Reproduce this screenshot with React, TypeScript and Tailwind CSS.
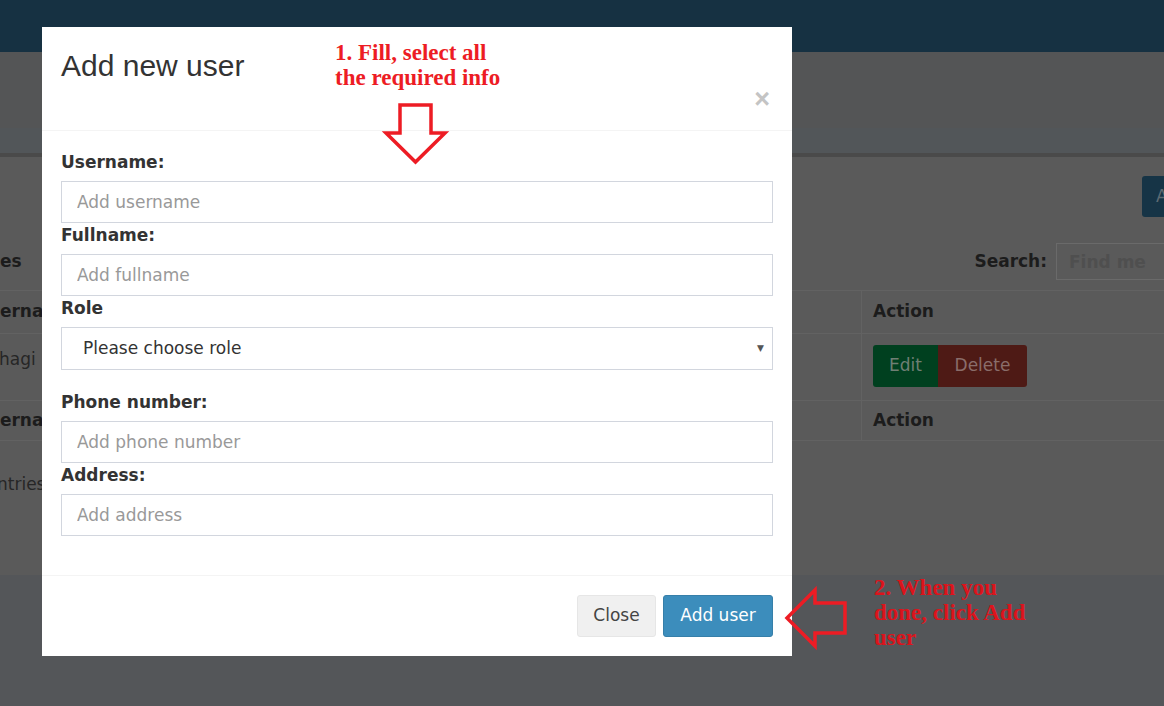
import React from "react";

const red = "#ed1c24";

function Field({ label, ph }: { label: string; ph: string }) {
  return (
    <div>
      <label className="mb-[6px] block text-[17px] font-bold leading-[25px] text-[#333]">{label}</label>
      <input
        className="block h-[42px] w-full border border-[#d2d6de] px-[15px] text-[17px] text-[#555] outline-none placeholder:text-[#999]"
        placeholder={ph}
      />
    </div>
  );
}

function Background() {
  return (
    <div className="flex h-full flex-col">
      <div className="h-[52px] bg-[#163142]" />
      <div className="h-[76px] bg-[#545556]" />
      <div className="h-[25px] bg-[#525659]" />
      <div className="h-[4px] bg-[#4a4a4a]" />
      <div className="h-[418px] overflow-hidden bg-[#5a5a5a] pt-[19px] text-[17px] text-[#1c1c1c]">
        <div className="flex h-[41px] justify-end">
          <div className="-mr-[60px] flex w-[82px] items-center rounded-[3px] bg-[#163446] pl-[14px] text-[#5d6a72]">
            Add
          </div>
        </div>
        <div className="mt-[26px] flex h-[37px] items-center justify-between">
          <span className="font-bold">es</span>
          <div className="flex items-center">
            <span className="font-bold">Search:</span>
            <div className="-mr-[12px] ml-[9px] flex h-[37px] w-[120px] items-center border border-[#6a6a6a] pl-[12px] pt-[2px] font-bold text-[#4f4f4f]">
              Find me
            </div>
          </div>
        </div>
        <div className="mt-[10px] border-t border-[#626262]">
          <div className="flex h-[43px] border-b border-[#626262] font-bold">
            <div className="flex w-[861px] items-center overflow-hidden">
              <span className="-ml-[24px]">Username</span>
            </div>
            <div className="flex flex-1 items-center border-l border-[#626262] pl-[11px]">Action</div>
          </div>
          <div className="flex h-[67px] border-b border-[#626262]">
            <div className="w-[861px] overflow-hidden pt-[13px] text-[#262626]">
              <span className="-ml-[1px]">hagi</span>
            </div>
            <div className="flex-1 border-l border-[#626262] pl-[11px] pt-[11px]">
              <div className="flex h-[42px] w-[154px] overflow-hidden rounded-[3px]">
                <div className="flex w-[65px] items-center justify-center bg-[#00401f] text-[#6f7f74]">Edit</div>
                <div className="flex flex-1 items-center justify-center bg-[#4e1a15] text-[#8a6d6a]">Delete</div>
              </div>
            </div>
          </div>
          <div className="flex h-[40px] border-b border-[#626262] font-bold">
            <div className="flex w-[861px] items-center overflow-hidden">
              <span className="-ml-[24px]">Username</span>
            </div>
            <div className="flex flex-1 items-center border-l border-[#626262] pl-[11px]">Action</div>
          </div>
        </div>
        <div className="mt-[31px] leading-[24px] text-[#262626]">
          <span className="-ml-[3px] inline-block">ntries</span>
        </div>
      </div>
      <div className="flex-1 bg-[#545659]" />
    </div>
  );
}

function Modal() {
  return (
    <div className="absolute left-[42px] top-[27px] w-[750px] bg-white">
      <div className="flex h-[104px] justify-between border-b border-[#f4f4f4] pl-[19px] pr-[22px]">
        <h3 className="pt-[21px] font-['Liberation_Sans',sans-serif] text-[30px] leading-[36px] text-[#333]">
          Add new user
        </h3>
        <span className="self-end pb-[17px] font-['Liberation_Sans',sans-serif] text-[27px] font-bold leading-none text-[#c4c4c4]">
          ×
        </span>
      </div>
      <div className="px-[19px] pb-[39px] pt-[19px]">
        <Field label="Username:" ph="Add username" />
        <Field label="Fullname:" ph="Add fullname" />
        <div className="mb-[20px]">
          <label className="mb-[6px] block text-[17px] font-bold leading-[25px] text-[#333]">Role</label>
          <div className="flex h-[43px] items-center justify-between border border-[#d2d6de] pl-[21px] pr-[8px] text-[17px] text-[#333]">
            <span>Please choose role</span>
            <span className="text-[9px] text-[#555]">▼</span>
          </div>
        </div>
        <Field label="Phone number:" ph="Add phone number" />
        <Field label="Address:" ph="Add address" />
      </div>
      <div className="flex justify-end gap-[7px] border-t border-[#f4f4f4] p-[19px] text-[17px]">
        <button className="h-[42px] w-[79px] rounded-[3px] border border-[#e6e6e6] bg-[#f0f0f0] text-[#444]">Close</button>
        <button className="h-[42px] w-[110px] rounded-[3px] border border-[#367fa9] bg-[#3c8dbc] text-white">
          Add user
        </button>
      </div>
    </div>
  );
}

function Notes() {
  return (
    <>
      <div className="absolute left-[335px] top-[40px] font-['Liberation_Serif',serif] text-[23px] font-bold leading-[25px] text-[#ed1c24]">
        1. Fill, select all
        <br />
        the required info
      </div>
      <svg className="absolute left-[380px] top-[100px]" width="70" height="70" viewBox="380 100 70 70">
        <polygon
          points="400,105 431,105 431,133 445,133 415.5,162 386,133 400,133"
          fill="none"
          stroke={red}
          strokeWidth="3.5"
        />
      </svg>
      <svg className="absolute left-[780px] top-[584px]" width="70" height="70" viewBox="780 584 70 70">
        <polygon
          points="787,618 815,590 815,603 845,603 845,633 815,633 815,646"
          fill="none"
          stroke={red}
          strokeWidth="3.5"
        />
      </svg>
      <div className="absolute left-[874px] top-[575px] font-['Liberation_Serif',serif] text-[23px] font-bold leading-[25px] text-[#dc141c]">
        2. When you
        <br />
        done, click Add
        <br />
        user
      </div>
    </>
  );
}

export default function App() {
  return (
    <div className="relative h-[706px] w-[1164px] overflow-hidden font-['DejaVu_Sans',sans-serif]">
      <Background />
      <Modal />
      <Notes />
    </div>
  );
}
